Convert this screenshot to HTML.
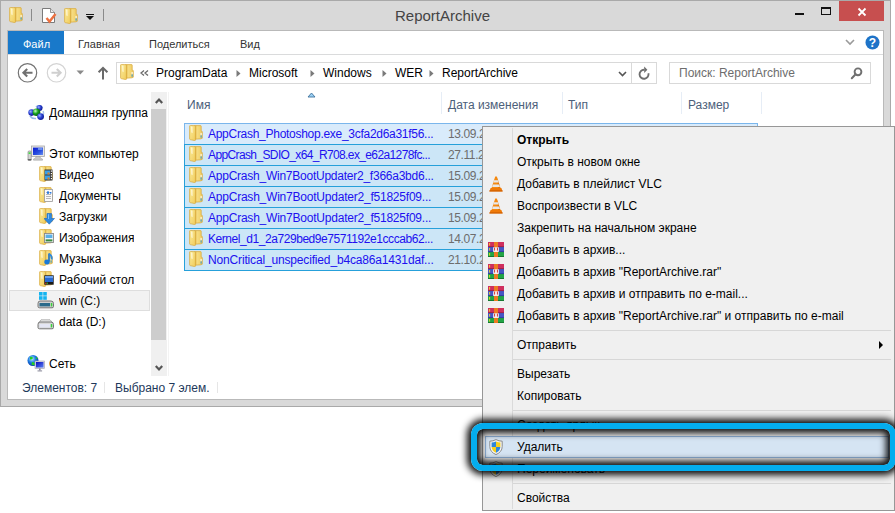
<!DOCTYPE html>
<html><head><meta charset="utf-8">
<style>
*{margin:0;padding:0;box-sizing:border-box}
html,body{width:895px;height:513px;overflow:hidden;background:#fff}
body{position:relative;font-family:"Liberation Sans",sans-serif;font-size:12px;color:#000}
.a{position:absolute}
.t{position:absolute;line-height:14px;white-space:nowrap;font-size:12px}
</style></head><body>
<svg width="0" height="0" style="position:absolute"><defs>
<linearGradient id="fgL" x1="0" y1="0" x2="1" y2="1"><stop offset="0" stop-color="#fcec9c"/><stop offset="1" stop-color="#f0cc5c"/></linearGradient>
<linearGradient id="fgR" x1="0" y1="0" x2="1" y2="0"><stop offset="0" stop-color="#d9ad3e"/><stop offset="0.35" stop-color="#f6dc82"/><stop offset="1" stop-color="#efcc60"/></linearGradient>
<symbol id="fold" viewBox="0 0 14 16">
<path d="M5.5 0.6 L11.6 0.6 Q12.2 0.6 12.2 1.2 L12.2 6.2 L13.3 6.6 L13.3 13.2 L12 13.8 L6 14.2 Z" fill="url(#fgR)" stroke="#d9a838" stroke-width="0.7"/>
<path d="M0.6 1 Q0.6 0.4 1.4 0.4 L5.6 0.7 L6.4 1.2 L6.4 15.2 Q6.2 15.7 5.6 15.6 L1.2 14.6 Q0.6 14.4 0.6 13.8 Z" fill="url(#fgL)" stroke="#d9a838" stroke-width="0.7"/>
<path d="M2.2 1.6 L3.4 1.8 L3.6 8 L2.4 7.6 Z" fill="#fffbe6" opacity="0.9"/>
<rect x="11.6" y="8" width="1" height="2.4" fill="#ffffff"/>
<rect x="11.6" y="10.3" width="1" height="2.4" fill="#2e96d8"/>
</symbol>
<symbol id="vlc" viewBox="0 0 14 16">
<path d="M6.2 0.6 L7.8 0.6 L11.6 12.5 L2.4 12.5 Z" fill="#f58a10"/>
<path d="M7.8 0.6 L11.6 12.5 L9.2 12.5 Z" fill="#d86a00" opacity="0.6"/>
<path d="M5 4.2 L9 4.2 L9.7 6.6 L4.3 6.6 Z" fill="#e8e8e8"/>
<path d="M3.8 8.4 L10.2 8.4 L10.9 10.9 L3.1 10.9 Z" fill="#e8e8e8"/>
<path d="M1.6 12 L12.4 12 L13.6 15.4 L0.4 15.4 Z" fill="#ef7a08"/>
<path d="M0.4 14.4 L13.6 14.4 L13.6 15.4 L0.4 15.4 Z" fill="#c85a00"/>
</symbol>
<symbol id="rar" viewBox="0 0 16 15">
<rect x="0" y="0" width="16" height="5" fill="#cf2f5e"/>
<rect x="0" y="5" width="16" height="5" fill="#4656c4"/>
<rect x="0" y="10" width="16" height="5" fill="#22a546"/>
<rect x="0" y="4.3" width="16" height="0.8" fill="#6a1030" opacity="0.6"/>
<rect x="0" y="9.3" width="16" height="0.8" fill="#1a2070" opacity="0.6"/>
<rect x="0" y="14.2" width="16" height="0.8" fill="#0a4a1a" opacity="0.6"/>
<rect x="6" y="0" width="4" height="15" fill="#ee7a22"/>
<rect x="5.2" y="5.3" width="5.6" height="4.6" fill="#fafafa"/>
<rect x="6.2" y="5.6" width="0.9" height="3" fill="#d01818"/>
<rect x="8.9" y="5.6" width="0.9" height="3" fill="#d01818"/>
<rect x="1.2" y="1" width="0.9" height="2.6" fill="#f7d92a"/>
<rect x="1.2" y="6" width="0.9" height="2.6" fill="#f7d92a"/>
<rect x="1.2" y="11" width="0.9" height="2.6" fill="#f7d92a"/>
</symbol>
<symbol id="shield" viewBox="0 0 14 16">
<path d="M7 0.6 Q10 2.2 13.2 2.2 L13.2 7.5 Q13.2 13 7 15.6 Q0.8 13 0.8 7.5 L0.8 2.2 Q4 2.2 7 0.6 Z" fill="#f4f4f4" stroke="#8c8c8c" stroke-width="1"/>
<path d="M7 2.4 L7 8 L2.6 8 L2.6 3.6 Q5 3.4 7 2.4 Z" fill="#2f86dc"/>
<path d="M7 2.4 Q9 3.4 11.4 3.6 L11.4 8 L7 8 Z" fill="#f7cf1e"/>
<path d="M2.6 8 L7 8 L7 13.8 Q3 12 2.6 8 Z" fill="#f7cf1e"/>
<path d="M7 8 L11.4 8 Q11 12 7 13.8 Z" fill="#2f86dc"/>
</symbol>
</defs></svg>
<div class="a" style="left:0px;top:0px;width:891px;height:407px;background:#d9d9d9;border:1px solid #a9a9a9"></div>
<svg class="a" style="left:9px;top:7px" width="14" height="16"><use href="#fold"/></svg>
<div class="a" style="left:31px;top:9px;width:1px;height:12px;background:#8a8a8a"></div>
<svg class="a" style="left:41px;top:7px;" width="16" height="17" viewBox="0 0 16 17"><path d="M1.5 1.5 H9.5 L13.5 5.5 V15.5 H1.5 Z" fill="#fff" stroke="#7a7a7a" stroke-width="1"/><path d="M9.5 1.5 V5.5 H13.5" fill="#e8e8e8" stroke="#7a7a7a" stroke-width="0.8"/><path d="M5.5 11 L8.5 14.5 L14.5 7" stroke="#ec7040" stroke-width="2.4" fill="none"/></svg>
<svg class="a" style="left:64px;top:8px" width="14" height="16"><use href="#fold"/></svg>
<div class="a" style="left:86px;top:14px;width:8px;height:1px;background:#111"></div>
<svg class="a" style="left:86px;top:16px;" width="8" height="5" viewBox="0 0 8 5"><path d="M0 0 L8 0 L4 4 Z" fill="#111"/></svg>
<div class="a" style="left:103px;top:9px;width:1px;height:12px;background:#8a8a8a"></div>
<div class="t" style="left:395px;top:9px;color:#444;font-size:15px;">ReportArchive</div>
<div class="a" style="left:795px;top:13px;width:9px;height:2px;background:#111"></div>
<div class="a" style="left:821px;top:7px;width:10px;height:8px;border:1px solid #111;border-top-width:2px"></div>
<div class="a" style="left:839px;top:1px;width:45px;height:20px;background:#c74f4f"></div>
<svg class="a" style="left:857px;top:7px;" width="10" height="10" viewBox="0 0 10 10"><path d="M1.5 1.5 L8.5 8.5 M8.5 1.5 L1.5 8.5" stroke="#fff" stroke-width="1.8"/></svg>
<div class="a" style="left:7px;top:30px;width:877px;height:370px;background:#fff;border:1px solid #b9b9b9"></div>
<div class="a" style="left:8px;top:31px;width:56px;height:23px;background:#1979ca"></div>
<div class="t" style="left:23px;top:37px;color:#fff;font-size:11px;">Файл</div>
<div class="t" style="left:78px;top:37px;color:#333;font-size:11px;">Главная</div>
<div class="t" style="left:149px;top:37px;color:#333;font-size:11px;">Поделиться</div>
<div class="t" style="left:240px;top:37px;color:#333;font-size:11px;">Вид</div>
<div class="a" style="left:8px;top:54px;width:875px;height:1px;background:#dadbdc"></div>
<svg class="a" style="left:845px;top:39px;" width="10" height="7" viewBox="0 0 10 7"><path d="M1 1 L5 5 L9 1" stroke="#9a9a9a" stroke-width="1.6" fill="none"/></svg>
<svg class="a" style="left:865px;top:35px;" width="15" height="15" viewBox="0 0 15 15"><circle cx="7.5" cy="7.5" r="7" fill="#1e73c8"/><text x="7.5" y="12" text-anchor="middle" font-family="Liberation Sans" font-weight="bold" font-size="12" fill="#fff">?</text></svg>
<svg class="a" style="left:17px;top:62px;" width="21" height="21" viewBox="0 0 21 21"><circle cx="10.5" cy="10.8" r="9.2" stroke="#737373" stroke-width="1.2" fill="none"/><path d="M15.5 10.8 H6.5 M10.2 7 L6.4 10.8 L10.2 14.6" stroke="#707070" stroke-width="2.1" fill="none"/></svg>
<svg class="a" style="left:46px;top:62px;" width="21" height="21" viewBox="0 0 21 21"><circle cx="10.5" cy="10.8" r="9.2" stroke="#d4d4d4" stroke-width="1.2" fill="none"/><path d="M5.5 10.8 H14.5 M10.8 7 L14.6 10.8 L10.8 14.6" stroke="#cfcfcf" stroke-width="2.1" fill="none"/></svg>
<svg class="a" style="left:76px;top:70px;" width="9" height="6" viewBox="0 0 9 6"><path d="M0.5 0.5 L8 0.5 L4.25 4.5 Z" fill="#8a8a8a"/></svg>
<svg class="a" style="left:97px;top:66px;" width="12" height="14" viewBox="0 0 12 14"><path d="M6 13.5 V2 M1.6 6.2 L6 1.8 L10.4 6.2" stroke="#6a6a6a" stroke-width="2" fill="none"/></svg>
<div class="a" style="left:116px;top:62px;width:541px;height:22px;border:1px solid #d9d9d9;background:#fff"></div>
<div class="a" style="left:631px;top:63px;width:1px;height:20px;background:#d9d9d9"></div>
<svg class="a" style="left:120px;top:64px" width="14" height="16"><use href="#fold"/></svg>
<svg class="a" style="left:140px;top:69px;" width="9" height="8" viewBox="0 0 9 8"><path d="M4 1.6 L1 4.1 L4 6.6 M8 1.6 L5 4.1 L8 6.6" stroke="#6a6a6a" stroke-width="1.3" fill="none"/></svg>
<div class="t" style="left:156px;top:66px;color:#000;font-size:12px;">ProgramData</div>
<svg class="a" style="left:236px;top:70px;" width="5" height="8" viewBox="0 0 5 8"><path d="M0.5 0 L4.5 3.5 L0.5 7 Z" fill="#7a7a7a"/></svg>
<div class="t" style="left:249px;top:66px;color:#000;font-size:12px;">Microsoft</div>
<svg class="a" style="left:310px;top:70px;" width="5" height="8" viewBox="0 0 5 8"><path d="M0.5 0 L4.5 3.5 L0.5 7 Z" fill="#7a7a7a"/></svg>
<div class="t" style="left:323px;top:66px;color:#000;font-size:12px;">Windows</div>
<svg class="a" style="left:382px;top:70px;" width="5" height="8" viewBox="0 0 5 8"><path d="M0.5 0 L4.5 3.5 L0.5 7 Z" fill="#7a7a7a"/></svg>
<div class="t" style="left:395px;top:66px;color:#000;font-size:12px;">WER</div>
<svg class="a" style="left:429px;top:70px;" width="5" height="8" viewBox="0 0 5 8"><path d="M0.5 0 L4.5 3.5 L0.5 7 Z" fill="#7a7a7a"/></svg>
<div class="t" style="left:442px;top:66px;color:#000;font-size:12px;">ReportArchive</div>
<svg class="a" style="left:618px;top:71px;" width="9" height="6" viewBox="0 0 9 6"><path d="M1 1 L4.5 4.5 L8 1" stroke="#555" stroke-width="1.6" fill="none"/></svg>
<svg class="a" style="left:634px;top:64px;" width="22" height="20" viewBox="0 0 22 20"><path d="M14.4 9.2 A4.5 4.5 0 1 1 10.2 5.8" stroke="#6e6e6e" stroke-width="1.9" fill="none"/><path d="M10.2 2.6 L13.4 5.8 L10.2 9 Z" fill="#6e6e6e"/></svg>
<div class="a" style="left:669px;top:62px;width:202px;height:22px;border:1px solid #d9d9d9;background:#fff"></div>
<div class="t" style="left:679px;top:66px;color:#6d6d6d;font-size:12px;">Поиск: ReportArchive</div>
<svg class="a" style="left:850px;top:67px;" width="13" height="13" viewBox="0 0 13 13"><circle cx="8" cy="4.8" r="3.4" stroke="#707070" stroke-width="1.9" fill="none"/><path d="M5.6 7.2 L1.8 11.2" stroke="#707070" stroke-width="2" stroke-linecap="round"/></svg>
<div class="a" style="left:151px;top:92px;width:16px;height:284px;background:#f0f0f0"></div>
<div class="a" style="left:151px;top:109px;width:15px;height:231px;background:#cdcdcd"></div>
<svg class="a" style="left:154px;top:97px;" width="10" height="8" viewBox="0 0 10 8"><path d="M1.8 6 L5 2.6 L8.2 6" stroke="#555" stroke-width="2.2" fill="none"/></svg>
<svg class="a" style="left:154px;top:364px;" width="10" height="8" viewBox="0 0 10 8"><path d="M1.8 2 L5 5.4 L8.2 2" stroke="#555" stroke-width="2.2" fill="none"/></svg>
<div class="a" style="left:168px;top:92px;width:1px;height:284px;background:#f3f3f3"></div>
<div class="a" style="left:9px;top:290px;width:141px;height:21px;background:#f2f2f2;border:1px solid #dedede"></div>
<div class="t" style="left:49px;top:106px;color:#000;font-size:12px;max-width:101px;overflow:hidden">Домашняя группа</div>
<div class="t" style="left:49px;top:147px;color:#000;font-size:12px;max-width:101px;overflow:hidden">Этот компьютер</div>
<div class="t" style="left:59px;top:168px;color:#000;font-size:12px;max-width:91px;overflow:hidden">Видео</div>
<div class="t" style="left:59px;top:189px;color:#000;font-size:12px;max-width:91px;overflow:hidden">Документы</div>
<div class="t" style="left:59px;top:210px;color:#000;font-size:12px;max-width:91px;overflow:hidden">Загрузки</div>
<div class="t" style="left:59px;top:231px;color:#000;font-size:12px;max-width:91px;overflow:hidden">Изображения</div>
<div class="t" style="left:59px;top:252px;color:#000;font-size:12px;max-width:91px;overflow:hidden">Музыка</div>
<div class="t" style="left:59px;top:273px;color:#000;font-size:12px;max-width:91px;overflow:hidden">Рабочий стол</div>
<div class="t" style="left:59px;top:294px;color:#000;font-size:12px;max-width:91px;overflow:hidden">win (C:)</div>
<div class="t" style="left:59px;top:315px;color:#000;font-size:12px;max-width:91px;overflow:hidden">data (D:)</div>
<div class="t" style="left:49px;top:357px;color:#000;font-size:12px;max-width:101px;overflow:hidden">Сеть</div>
<svg class="a" style="left:39px;top:166px" width="14" height="16"><use href="#fold"/></svg>
<svg class="a" style="left:39px;top:187px" width="14" height="16"><use href="#fold"/></svg>
<svg class="a" style="left:39px;top:208px" width="14" height="16"><use href="#fold"/></svg>
<svg class="a" style="left:39px;top:229px" width="14" height="16"><use href="#fold"/></svg>
<svg class="a" style="left:39px;top:250px" width="14" height="16"><use href="#fold"/></svg>
<svg class="a" style="left:39px;top:271px" width="14" height="16"><use href="#fold"/></svg>
<svg class="a" style="left:27px;top:103px;" width="18" height="18" viewBox="0 0 18 18"><defs><radialGradient id="hgB" cx="0.35" cy="0.35" r="0.7"><stop offset="0" stop-color="#9ab4ff"/><stop offset="0.5" stop-color="#2a3fd0"/><stop offset="1" stop-color="#101a90"/></radialGradient><radialGradient id="hgG" cx="0.35" cy="0.35" r="0.7"><stop offset="0" stop-color="#c8ffc0"/><stop offset="0.5" stop-color="#16a01e"/><stop offset="1" stop-color="#06600a"/></radialGradient></defs><path d="M9 4 Q13 1 15.5 5" stroke="#6a9ae0" stroke-width="1.6" fill="none" opacity="0.7"/><path d="M3 13 Q5 16 9 15.5" stroke="#6a9ae0" stroke-width="1.6" fill="none" opacity="0.7"/><path d="M16 8 Q17.5 11 15 14" stroke="#6a9ae0" stroke-width="1.4" fill="none" opacity="0.6"/><circle cx="12.6" cy="5" r="2.9" fill="url(#hgB)"/><circle cx="4.6" cy="9.6" r="3.3" fill="url(#hgB)"/><circle cx="9.5" cy="9.2" r="3.8" fill="url(#hgG)"/><circle cx="13.6" cy="13.6" r="3.4" fill="url(#hgB)"/></svg>
<svg class="a" style="left:27px;top:145px;" width="18" height="17" viewBox="0 0 18 17"><defs><linearGradient id="scr" x1="0" y1="0" x2="1" y2="1"><stop offset="0" stop-color="#0a1ad0"/><stop offset="0.6" stop-color="#2a50e0"/><stop offset="1" stop-color="#6a90f0"/></linearGradient></defs><rect x="4.5" y="1" width="13" height="10.5" fill="#e6e6e6" stroke="#a8a8a8" stroke-width="0.8"/><rect x="6" y="2.6" width="10" height="7.4" fill="url(#scr)"/><rect x="11" y="3" width="4.5" height="2" fill="#8ab0f8" opacity="0.7"/><path d="M9 11.5 L13 11.5 L13.5 13.2 L15.5 14 L15.5 15.2 L6.5 15.2 L6.5 14 L8.5 13.2 Z" fill="#c8c8c8" stroke="#999" stroke-width="0.5"/><rect x="1" y="6" width="3.2" height="9.4" rx="1" fill="#d4d4d4" stroke="#8a8a8a" stroke-width="0.7"/><rect x="1.6" y="7.4" width="2" height="1.4" fill="#22dd22"/><rect x="0.8" y="14" width="3.6" height="1.4" fill="#666"/></svg>
<svg class="a" style="left:44px;top:169px;" width="9" height="12" viewBox="0 0 9 12"><rect x="0.5" y="0.5" width="8" height="11" fill="#3a3a3a"/><rect x="1" y="1.5" width="5" height="4" fill="#3aa0e8"/><rect x="1" y="6.5" width="5" height="4" fill="#3aa0e8"/><rect x="3.5" y="3.5" width="2" height="2" fill="#e08020"/><rect x="3.5" y="8.5" width="2" height="2" fill="#e08020"/><rect x="6.8" y="1.5" width="1.2" height="1.2" fill="#fff"/><rect x="6.8" y="4" width="1.2" height="1.2" fill="#fff"/><rect x="6.8" y="6.5" width="1.2" height="1.2" fill="#fff"/><rect x="6.8" y="9" width="1.2" height="1.2" fill="#fff"/></svg>
<svg class="a" style="left:44px;top:189px;" width="9" height="13" viewBox="0 0 9 13"><rect x="0.5" y="0.5" width="8" height="12" fill="#fafafa" stroke="#9a9a9a" stroke-width="0.8"/><rect x="2" y="3" width="5" height="1" fill="#b8b8b8"/><rect x="2" y="5" width="5" height="1" fill="#b8b8b8"/><rect x="2" y="7" width="5" height="1" fill="#b8b8b8"/><rect x="2" y="9" width="5" height="1" fill="#b8b8b8"/><rect x="3" y="2.4" width="2" height="2.4" fill="#2a7ae0"/><rect x="6" y="3" width="1.4" height="1.6" fill="#2a7ae0"/></svg>
<svg class="a" style="left:44px;top:213px;" width="11" height="12" viewBox="0 0 11 12"><path d="M3 0.5 L7.5 0.5 L7.5 5.5 L10.5 5.5 L5.25 11.2 L0 5.5 L3 5.5 Z" fill="#2f8ae0" stroke="#1a66c0" stroke-width="0.6"/><path d="M4 1.2 L5 1.2 L5 6 L4 6 Z" fill="#7ec0ff"/></svg>
<svg class="a" style="left:44px;top:233px;" width="10" height="10" viewBox="0 0 10 10"><rect x="0.5" y="0.5" width="9" height="9" fill="#f2f2f2" stroke="#8a8a8a" stroke-width="0.9"/><rect x="1.6" y="1.6" width="6.8" height="3.4" fill="#5ab0e8"/><rect x="1.6" y="5" width="6.8" height="1.6" fill="#e8f4ff"/><rect x="1.6" y="6.4" width="6.8" height="2" fill="#3a8a40"/></svg>
<svg class="a" style="left:44px;top:253px;" width="9" height="12" viewBox="0 0 9 12"><path d="M5 0.5 L5 8.5" stroke="#1a70c8" stroke-width="1.6"/><path d="M5 0.8 Q8.5 3 7.5 6.5" stroke="#2a88e0" stroke-width="1.8" fill="none"/><ellipse cx="3" cy="9" rx="2.7" ry="2.4" fill="#1a7ad8"/></svg>
<svg class="a" style="left:44px;top:275px;" width="10" height="10" viewBox="0 0 10 10"><rect x="0.3" y="0.3" width="9.4" height="9.4" fill="#1a1a1a"/><rect x="1" y="1" width="8" height="6" fill="#2a6ad0"/><rect x="1" y="1" width="8" height="2" fill="#6aa0ee"/><rect x="1.2" y="7.6" width="1.3" height="1.3" fill="#f03030"/><rect x="2.6" y="7.6" width="1.3" height="1.3" fill="#30c030"/></svg>
<svg class="a" style="left:37px;top:291px;" width="18" height="18" viewBox="0 0 18 18"><rect x="2" y="1" width="3.6" height="3.6" fill="#14b4f0"/><rect x="6.2" y="1" width="3.6" height="3.6" fill="#14b4f0"/><rect x="2" y="5.2" width="3.6" height="3.6" fill="#14b4f0"/><rect x="6.2" y="5.2" width="3.6" height="3.6" fill="#14b4f0"/><path d="M3 10 L14 10 Q16.5 10 16.5 12.5 L16.5 15.5 Q16.5 16.8 15 16.8 L2.5 16.8 Q1 16.8 1 15.5 L1 12.5 Q1 10 3 10 Z" fill="#cfcfcf" stroke="#6a6a6a" stroke-width="0.9"/><rect x="2.5" y="12" width="10.5" height="3.4" fill="#2a6a8a"/><rect x="13.8" y="12" width="1.5" height="3.4" fill="#3ad03a"/></svg>
<svg class="a" style="left:37px;top:319px;" width="18" height="11" viewBox="0 0 18 11"><path d="M4 0.8 L13 0.8 L15.5 3.5 L2 3.5 Z" fill="#eaeaea" stroke="#9a9a9a" stroke-width="0.7"/><path d="M3 3 L14 3 Q16.5 3 16.5 5.5 L16.5 8.5 Q16.5 9.8 15 9.8 L2.5 9.8 Q1 9.8 1 8.5 L1 5.5 Q1 3 3 3 Z" fill="#d8d8d8" stroke="#6a6a6a" stroke-width="0.9"/><rect x="2.5" y="5" width="10.5" height="3.4" fill="#e4e6f4"/><rect x="13.8" y="5" width="1.5" height="3.4" fill="#3ad03a"/></svg>
<svg class="a" style="left:27px;top:354px;" width="18" height="18" viewBox="0 0 18 18"><defs><radialGradient id="glb" cx="0.4" cy="0.35" r="0.7"><stop offset="0" stop-color="#bff0ff"/><stop offset="0.5" stop-color="#1a7ae0"/><stop offset="1" stop-color="#0a30a0"/></radialGradient><linearGradient id="scr2" x1="0" y1="0" x2="1" y2="1"><stop offset="0" stop-color="#0a0ac0"/><stop offset="1" stop-color="#5a80f0"/></linearGradient></defs><circle cx="6" cy="6.5" r="5.5" fill="url(#glb)"/><path d="M3 3 Q5 2 6 4 Q5 6 3 5.5 Z M5 8 Q8 8 8 10.5 Q6 12 4.5 10.5 Z M9 3 Q10.5 3.5 10.5 5 L9 5 Z" fill="#22d022"/><rect x="8" y="7" width="9.5" height="7.5" fill="#d8d8e8" stroke="#a0a0b0" stroke-width="0.6"/><rect x="9" y="8" width="7.5" height="5.5" fill="url(#scr2)"/><rect x="12" y="14.5" width="1.6" height="2" fill="#8a8a98"/><rect x="10.5" y="16.3" width="4.6" height="1.2" fill="#9a9aa8"/></svg>
<div class="t" style="left:187px;top:98px;color:#4c607a;font-size:12px;">Имя</div>
<svg class="a" style="left:307px;top:92px;" width="9" height="6" viewBox="0 0 9 6"><path d="M1 5 L4.5 1 L8 5 Z" fill="#9ad0f4" stroke="#40729c" stroke-width="0.9" stroke-linejoin="round"/></svg>
<div class="a" style="left:441px;top:92px;width:1px;height:22px;background:#e6edf6"></div>
<div class="a" style="left:562px;top:92px;width:1px;height:22px;background:#e6edf6"></div>
<div class="a" style="left:681px;top:92px;width:1px;height:22px;background:#e6edf6"></div>
<div class="a" style="left:761px;top:92px;width:1px;height:22px;background:#e6edf6"></div>
<div class="t" style="left:448px;top:98px;color:#4c607a;font-size:12px;">Дата изменения</div>
<div class="t" style="left:568px;top:98px;color:#4c607a;font-size:12px;">Тип</div>
<div class="t" style="left:688px;top:98px;color:#4c607a;font-size:12px;">Размер</div>
<div class="a" style="left:184px;top:123px;width:574px;height:148px;background:#cce6f7;border:1px solid #26a0da"></div>
<div class="a" style="left:185px;top:124px;width:572px;height:20px;background:#d9ebfb"></div>
<div class="a" style="left:184px;top:123px;width:574px;height:1px;background:#7ab6ec"></div>
<div class="a" style="left:184px;top:123px;width:1px;height:21px;background:#7ab6ec"></div>
<div class="a" style="left:757px;top:123px;width:1px;height:21px;background:#7ab6ec"></div>
<div class="a" style="left:184px;top:144px;width:574px;height:1px;background:#26a0da"></div>
<div class="a" style="left:184px;top:165px;width:574px;height:1px;background:#26a0da"></div>
<div class="a" style="left:184px;top:186px;width:574px;height:1px;background:#26a0da"></div>
<div class="a" style="left:184px;top:207px;width:574px;height:1px;background:#26a0da"></div>
<div class="a" style="left:184px;top:228px;width:574px;height:1px;background:#26a0da"></div>
<div class="a" style="left:184px;top:249px;width:574px;height:1px;background:#26a0da"></div>
<svg class="a" style="left:189px;top:125px" width="14" height="16"><use href="#fold"/></svg>
<div class="t" style="left:208px;top:127px;color:#2010f0;font-size:12px;letter-spacing:-0.28px;">AppCrash_Photoshop.exe_3cfa2d6a31f56...</div>
<div class="t" style="left:448px;top:127px;color:#6d6d6d;font-size:12px;letter-spacing:-0.4px;">13.09.2016</div>
<svg class="a" style="left:189px;top:146px" width="14" height="16"><use href="#fold"/></svg>
<div class="t" style="left:208px;top:148px;color:#2010f0;font-size:12px;letter-spacing:-0.62px;">AppCrash_SDIO_x64_R708.ex_e62a1278fc...</div>
<div class="t" style="left:448px;top:148px;color:#6d6d6d;font-size:12px;letter-spacing:-0.4px;">27.11.2016</div>
<svg class="a" style="left:189px;top:167px" width="14" height="16"><use href="#fold"/></svg>
<div class="t" style="left:208px;top:169px;color:#2010f0;font-size:12px;letter-spacing:-0.24px;">AppCrash_Win7BootUpdater2_f366a3bd6...</div>
<div class="t" style="left:448px;top:169px;color:#6d6d6d;font-size:12px;letter-spacing:-0.4px;">15.09.2016</div>
<svg class="a" style="left:189px;top:188px" width="14" height="16"><use href="#fold"/></svg>
<div class="t" style="left:208px;top:190px;color:#2010f0;font-size:12px;letter-spacing:-0.22px;">AppCrash_Win7BootUpdater2_f51825f09...</div>
<div class="t" style="left:448px;top:190px;color:#6d6d6d;font-size:12px;letter-spacing:-0.4px;">15.09.2016</div>
<svg class="a" style="left:189px;top:209px" width="14" height="16"><use href="#fold"/></svg>
<div class="t" style="left:208px;top:211px;color:#2010f0;font-size:12px;letter-spacing:-0.22px;">AppCrash_Win7BootUpdater2_f51825f09...</div>
<div class="t" style="left:448px;top:211px;color:#6d6d6d;font-size:12px;letter-spacing:-0.4px;">15.09.2016</div>
<svg class="a" style="left:189px;top:230px" width="14" height="16"><use href="#fold"/></svg>
<div class="t" style="left:208px;top:232px;color:#2010f0;font-size:12px;letter-spacing:-0.44px;">Kernel_d1_2a729bed9e7571192e1cccab62...</div>
<div class="t" style="left:448px;top:232px;color:#6d6d6d;font-size:12px;letter-spacing:-0.4px;">14.07.2016</div>
<svg class="a" style="left:189px;top:251px" width="14" height="16"><use href="#fold"/></svg>
<div class="t" style="left:208px;top:253px;color:#2010f0;font-size:12px;letter-spacing:-0.16px;">NonCritical_unspecified_b4ca86a1431daf...</div>
<div class="t" style="left:448px;top:253px;color:#6d6d6d;font-size:12px;letter-spacing:-0.4px;">21.10.2016</div>
<div class="t" style="left:22px;top:381px;color:#1e395b;font-size:12px;">Элементов: 7</div>
<div class="a" style="left:104px;top:382px;width:1px;height:11px;background:#e6e6e6"></div>
<div class="t" style="left:115px;top:381px;color:#1e395b;font-size:12px;">Выбрано 7 элем.</div>
<div class="a" style="left:217px;top:382px;width:1px;height:11px;background:#e6e6e6"></div>
<div class="a" style="left:482px;top:126px;width:413px;height:385px;background:#f0f0f0;border:1px solid #979797"></div>
<div class="a" style="left:512px;top:128px;width:1px;height:381px;background:#dadada"></div>
<div class="a" style="left:513px;top:330px;width:378px;height:1px;background:#d7d7d7"></div>
<div class="a" style="left:513px;top:359px;width:378px;height:1px;background:#d7d7d7"></div>
<div class="a" style="left:513px;top:410px;width:378px;height:1px;background:#d7d7d7"></div>
<div class="a" style="left:513px;top:483px;width:378px;height:1px;background:#d7d7d7"></div>
<div class="a" style="left:485px;top:436px;width:404px;height:22px;background:#d5e4f3;border:1px solid #8fb1d8"></div>
<div class="t" style="left:517px;top:133px;color:#000;font-size:12px;font-weight:bold;">Открыть</div>
<div class="t" style="left:517px;top:155px;color:#000;font-size:12px;">Открыть в новом окне</div>
<div class="t" style="left:517px;top:177px;color:#000;font-size:12px;">Добавить в плейлист VLC</div>
<svg class="a" style="left:489px;top:176px" width="14" height="16"><use href="#vlc"/></svg>
<div class="t" style="left:517px;top:199px;color:#000;font-size:12px;">Воспроизвести в VLC</div>
<svg class="a" style="left:489px;top:198px" width="14" height="16"><use href="#vlc"/></svg>
<div class="t" style="left:517px;top:221px;color:#000;font-size:12px;">Закрепить на начальном экране</div>
<div class="t" style="left:517px;top:243px;color:#000;font-size:12px;">Добавить в архив...</div>
<svg class="a" style="left:488px;top:242px" width="16" height="15"><use href="#rar"/></svg>
<div class="t" style="left:517px;top:265px;color:#000;font-size:12px;">Добавить в архив "ReportArchive.rar"</div>
<svg class="a" style="left:488px;top:264px" width="16" height="15"><use href="#rar"/></svg>
<div class="t" style="left:517px;top:287px;color:#000;font-size:12px;">Добавить в архив и отправить по e-mail...</div>
<svg class="a" style="left:488px;top:286px" width="16" height="15"><use href="#rar"/></svg>
<div class="t" style="left:517px;top:309px;color:#000;font-size:12px;">Добавить в архив "ReportArchive.rar" и отправить по e-mail</div>
<svg class="a" style="left:488px;top:308px" width="16" height="15"><use href="#rar"/></svg>
<div class="t" style="left:517px;top:338px;color:#000;font-size:12px;">Отправить</div>
<div class="t" style="left:517px;top:367px;color:#000;font-size:12px;">Вырезать</div>
<div class="t" style="left:517px;top:389px;color:#000;font-size:12px;">Копировать</div>
<div class="t" style="left:517px;top:418px;color:#000;font-size:12px;">Создать ярлык</div>
<div class="t" style="left:517px;top:440px;color:#000;font-size:12px;">Удалить</div>
<svg class="a" style="left:489px;top:439px" width="14" height="16"><use href="#shield"/></svg>
<div class="t" style="left:517px;top:462px;color:#000;font-size:12px;">Переименовать</div>
<svg class="a" style="left:489px;top:461px" width="14" height="16"><use href="#shield"/></svg>
<div class="t" style="left:517px;top:491px;color:#000;font-size:12px;">Свойства</div>
<svg class="a" style="left:879px;top:341px;" width="5" height="8" viewBox="0 0 5 8"><path d="M0 0 L4 4 L0 8 Z" fill="#000"/></svg>
<div class="a" style="left:471px;top:423px;width:425px;height:48px;border:6px solid #04adee;border-radius:12px;box-shadow:0 0 7px 4px rgba(0,0,0,0.95), inset 0 0 7px 4px rgba(0,0,0,0.95)"></div>
</body></html>
